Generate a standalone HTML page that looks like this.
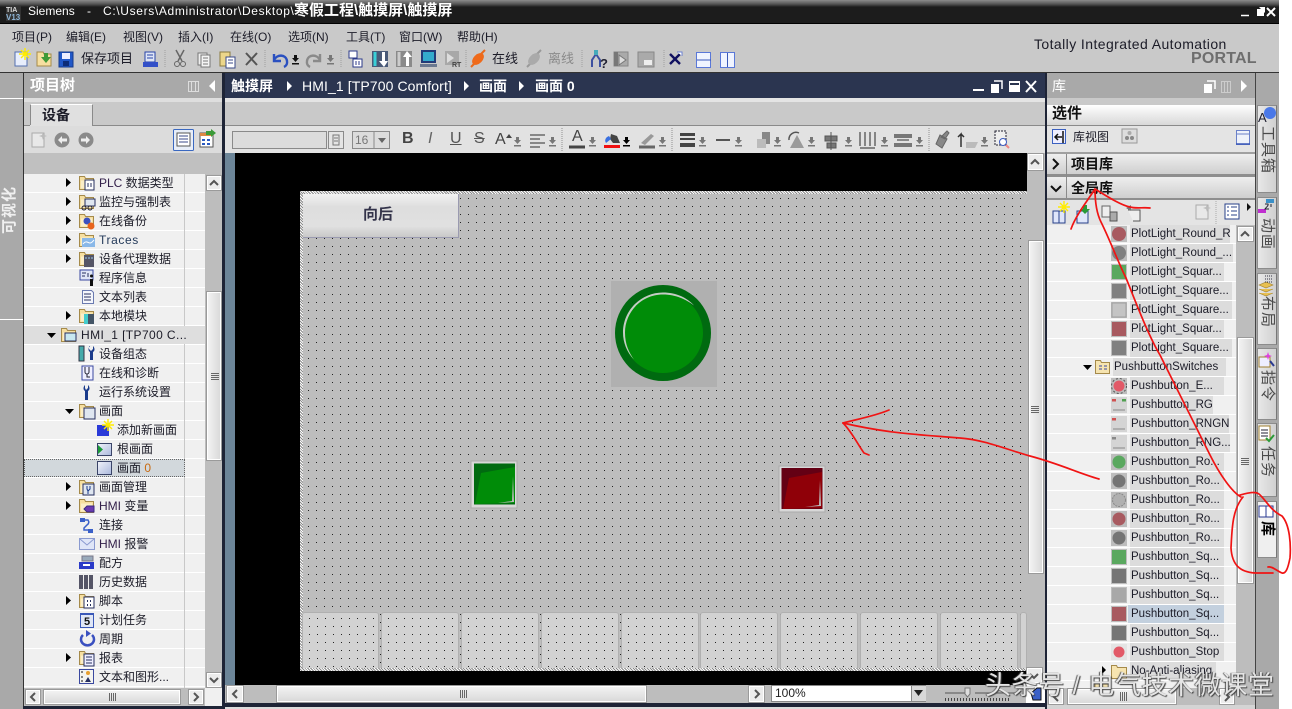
<!DOCTYPE html>
<html lang="zh"><head><meta charset="utf-8"><title>Siemens TIA Portal</title>
<style>
html,body{margin:0;padding:0;background:#fff}
#p{position:relative;width:1292px;height:709px;overflow:hidden;background:#fff;font:12px "Liberation Sans","WenQuanYi Zen Hei","Noto Sans CJK SC",sans-serif;color:#1c1c28}
.b{position:absolute}
.t{position:absolute;white-space:nowrap;line-height:16px}
.w{color:#fff}
.sb{position:absolute;background:linear-gradient(90deg,#f4f4f4,#d8d8d8);border:1px solid #9a9a9a;outline:1px solid #fff;outline-offset:-2px;box-sizing:border-box}
.sh{position:absolute;background:linear-gradient(#f4f4f4,#d8d8d8);border:1px solid #9a9a9a;outline:1px solid #fff;outline-offset:-2px;box-sizing:border-box}
.btn{position:absolute;background:#ececec;border:1px solid #9a9a9a;outline:1px solid #fff;outline-offset:-2px;box-sizing:border-box}
.c{position:absolute;background:#dcdcdc;height:18px;line-height:18px;white-space:nowrap;font-size:11.5px;padding-left:1px;box-sizing:border-box;color:#1c1c28}
.tab{position:absolute;left:1257px;width:20px;background:linear-gradient(90deg,#e8e8e8,#d0d0d0);border:1px solid #8c8c8c;border-right-color:#777;box-sizing:border-box}
.v{position:absolute;writing-mode:vertical-rl;text-orientation:sideways;white-space:nowrap;font-size:15px;line-height:18px;color:#4a4a4a;letter-spacing:1px}
.key{position:absolute;top:612px;height:56px;background-color:#d2d2d2;background-image:conic-gradient(from 0deg at 1px 1px,transparent 75%,#222 0);background-size:8px 8px;background-position:6px 5px;border:1px solid #b0b0b0;border-bottom:0;border-radius:3px 3px 0 0;box-sizing:border-box}
.h{background-image:repeating-linear-gradient(45deg,#fff 0 1px,#8a8a8a 1px 2px)}
</style></head><body><div id="p">

<!-- chrome -->
<div class="b" style="left:0;top:0;width:1279px;height:23px;background:linear-gradient(#8c8c8c 0,#555 4px,#1c1c1c 7px,#1c1c1c 100%)"></div>
<div class="b" style="left:0;top:23px;width:1279px;height:50px;background:#c9c9c9;border-top:1px solid #000;box-sizing:border-box"></div>
<div class="b" style="left:0;top:73px;width:1279px;height:636px;background:#a9a9a9"></div>
<div class="b" style="left:0;top:72px;width:1279px;height:1px;background:#333"></div>
<div class="b" style="left:0;top:98px;width:23px;height:1px;background:#fff"></div>
<div class="b" style="left:0;top:319px;width:23px;height:1px;background:#fff"></div>
<div class="b" style="left:23px;top:73px;width:1px;height:636px;background:#333"></div>

<!-- left panel -->
<div class="b" style="left:24px;top:73px;width:199px;height:25px;background:#a9a9a9"></div>
<div class="b" style="left:24px;top:98px;width:199px;height:28px;background:#c9c9c9;border-top:4px solid #dedede;box-sizing:border-box"></div>
<div class="b" style="left:30px;top:104px;width:63px;height:22px;background:#e0e0e0;border:1px solid #8a8a8a;border-bottom:0;border-top-color:#fff;box-sizing:border-box"></div>
<div class="b" style="left:24px;top:125px;width:199px;height:1px;background:#8a8a8a"></div>
<div class="b" style="left:30px;top:125px;width:62px;height:1px;background:#e0e0e0"></div>
<div class="b" style="left:24px;top:126px;width:199px;height:27px;background:#dcdcdc"></div>
<div class="b" style="left:24px;top:153px;width:199px;height:21px;background:#c0c0c0"></div>
<div class="b" style="left:24px;top:174px;width:181px;height:514px;background:repeating-linear-gradient(#f0f0f0 0 18px,#fff 18px 19px)"></div>
<div class="b" style="left:184px;top:174px;width:1px;height:514px;background:#c8c8c8"></div>
<div class="b" style="left:24px;top:326px;width:181px;height:18px;background:#dedede"></div>
<div class="b" style="left:24px;top:459px;width:161px;height:18px;background:#d2d8dc;border:1px dotted #666;box-sizing:border-box"></div>
<div class="b" style="left:205px;top:174px;width:18px;height:514px;background:#bdbdbd"></div>
<div class="btn" style="left:206px;top:175px;width:16px;height:16px"></div>
<div class="sb" style="left:206px;top:291px;width:16px;height:170px"></div>
<div class="btn" style="left:206px;top:672px;width:16px;height:16px"></div>
<div class="b" style="left:24px;top:688px;width:199px;height:18px;background:#f0f0f0"></div>
<div class="b" style="left:24px;top:688px;width:181px;height:18px;background:#bdbdbd"></div>
<div class="btn" style="left:25px;top:689px;width:16px;height:16px"></div>
<div class="sh" style="left:43px;top:689px;width:138px;height:16px"></div>
<div class="btn" style="left:188px;top:689px;width:16px;height:16px"></div>
<div class="b" style="left:23px;top:706px;width:202px;height:3px;background:#1e2436"></div>

<!-- divider -->
<div class="b" style="left:222px;top:73px;width:3px;height:636px;background:#1e2436"></div>
<div class="b" style="left:225px;top:153px;width:10px;height:532px;background:#6c8598"></div>

<!-- center -->
<div class="b" style="left:225px;top:73px;width:820px;height:25px;background:#2b3550"></div>
<div class="b" style="left:225px;top:98px;width:820px;height:4px;background:#e4e4e4"></div>
<div class="b" style="left:225px;top:102px;width:820px;height:24px;background:#c9c9c9"></div>
<div class="b" style="left:225px;top:125px;width:820px;height:1px;background:#8a8a8a"></div>
<div class="b" style="left:225px;top:126px;width:820px;height:27px;background:#e2e2e2"></div>
<div class="b" style="left:235px;top:153px;width:792px;height:532px;background:#000"></div>

<!-- HMI screen -->
<div class="b" style="left:300px;top:191px;width:727px;height:480px;background-color:#bdbdbd;background-image:conic-gradient(from 0deg at 1px 1px,transparent 75%,#222 0);background-size:8px 8px;background-position:8px 7px"></div>
<div class="b h" style="left:300px;top:191px;width:727px;height:3px"></div>
<div class="b h" style="left:300px;top:191px;width:3px;height:480px"></div>
<div class="b h" style="left:300px;top:668px;width:727px;height:3px"></div>
<div class="b" style="left:303px;top:194px;width:156px;height:44px;background:linear-gradient(#f2f2f2,#dedede 30%,#e0e0e0 75%,#c8c8c8);border-right:1px solid #9a9ab0;border-bottom:1px solid #9a9ab0;box-sizing:border-box"></div>
<div class="t" style="left:363px;top:207px;font-size:15px;font-weight:bold;color:#33334a">向后</div>
<div class="b" style="left:611px;top:281px;width:106px;height:106px;background:#b0b0b0"></div>
<div class="key" style="left:302px;width:77px"></div><div class="key" style="left:381px;width:78px"></div><div class="key" style="left:461px;width:78px"></div><div class="key" style="left:541px;width:78px"></div><div class="key" style="left:621px;width:78px"></div><div class="key" style="left:700px;width:78px"></div><div class="key" style="left:780px;width:78px"></div><div class="key" style="left:860px;width:78px"></div><div class="key" style="left:940px;width:78px"></div><div class="key" style="left:1020px;width:7px"></div>

<!-- center scrollbars -->
<div class="b" style="left:1027px;top:153px;width:18px;height:532px;background:#bdbdbd"></div>
<div class="btn" style="left:1027px;top:153px;width:17px;height:18px"></div>
<div class="sb" style="left:1028px;top:240px;width:16px;height:334px"></div>
<div class="btn" style="left:1026px;top:667px;width:17px;height:17px"></div>
<div class="b" style="left:225px;top:685px;width:820px;height:18px;background:#bdbdbd"></div>
<div class="btn" style="left:226px;top:685px;width:18px;height:18px"></div>
<div class="sh" style="left:276px;top:685px;width:371px;height:18px"></div>
<div class="btn" style="left:748px;top:685px;width:17px;height:18px"></div>
<div class="b" style="left:771px;top:685px;width:155px;height:17px;background:#fff;border:1px solid #888;box-sizing:border-box;line-height:15px;padding-left:3px;color:#222">100%</div>
<div class="b" style="left:911px;top:686px;width:15px;height:15px;background:#d8d8d8;border-left:1px solid #888;box-sizing:border-box"></div>
<div class="b" style="left:1026px;top:684px;width:19px;height:19px;background:#fff"></div>
<div class="b" style="left:225px;top:703px;width:820px;height:4px;background:#1e2436"></div>
<div class="b" style="left:225px;top:707px;width:820px;height:2px;background:#dcdcdc"></div>

<!-- right panel -->
<div class="b" style="left:1045px;top:73px;width:2px;height:636px;background:#1e2436"></div>
<div class="b" style="left:1047px;top:73px;width:208px;height:25px;background:#a9a9a9"></div>
<div class="b" style="left:1047px;top:98px;width:208px;height:7px;background:#c9c9c9"></div>
<div class="b" style="left:1047px;top:105px;width:208px;height:21px;background:linear-gradient(#fff,#d8d8d8);border-bottom:1px solid #8a8a8a;box-sizing:border-box"></div>
<div class="b" style="left:1047px;top:126px;width:208px;height:26px;background:#e4e4e4"></div>
<div class="b" style="left:1047px;top:152px;width:208px;height:3px;background:#a0a0a0"></div>
<div class="b" style="left:1047px;top:154px;width:208px;height:20px;background:linear-gradient(#eee,#cfcfcf)"></div>
<div class="b" style="left:1047px;top:174px;width:208px;height:3px;background:#8e8e8e"></div>
<div class="b" style="left:1047px;top:177px;width:208px;height:21px;background:linear-gradient(#eee,#cfcfcf)"></div>
<div class="b" style="left:1047px;top:198px;width:208px;height:2px;background:#8e8e8e"></div>
<div class="b" style="left:1066px;top:154px;width:1px;height:44px;background:#8a8a8a"></div>
<div class="b" style="left:1047px;top:200px;width:208px;height:25px;background:#e4e4e4"></div>
<div class="b" style="left:1047px;top:225px;width:189px;height:463px;background:repeating-linear-gradient(#f0f0f0 0 18px,#fff 18px 19px)"></div>
<div class="b" style="left:1236px;top:225px;width:19px;height:463px;background:#bdbdbd"></div>
<div class="btn" style="left:1237px;top:226px;width:17px;height:16px"></div>
<div class="sb" style="left:1237px;top:337px;width:17px;height:247px"></div>
<div class="b" style="left:1047px;top:688px;width:208px;height:17px;background:#bdbdbd"></div>
<div class="b" style="left:1047px;top:705px;width:208px;height:4px;background:#d4d4d4"></div>
<div class="btn" style="left:1048px;top:688px;width:16px;height:17px"></div>
<div class="sh" style="left:1067px;top:688px;width:110px;height:17px"></div>
<div class="btn" style="left:1219px;top:688px;width:16px;height:17px"></div>
<div class="b" style="left:1255px;top:73px;width:1px;height:636px;background:#444"></div>

<!-- right tabs -->
<div class="tab" style="top:105px;height:88px"></div>
<div class="tab" style="top:197px;height:72px"></div>
<div class="tab" style="top:273px;height:72px"></div>
<div class="tab" style="top:348px;height:72px"></div>
<div class="tab" style="top:423px;height:74px"></div>
<div class="tab" style="top:501px;height:57px;background:#efefef"></div>

<!-- library chips -->
<div class="c" style="left:1130px;top:225px;width:100px">PlotLight_Round_R</div>
<div class="c" style="left:1130px;top:244px;width:103px">PlotLight_Round_...</div>
<div class="c" style="left:1130px;top:263px;width:94px">PlotLight_Squar...</div>
<div class="c" style="left:1130px;top:282px;width:102px">PlotLight_Square...</div>
<div class="c" style="left:1130px;top:301px;width:102px">PlotLight_Square...</div>
<div class="c" style="left:1130px;top:320px;width:94px">PlotLight_Squar...</div>
<div class="c" style="left:1130px;top:339px;width:102px">PlotLight_Square...</div>
<div class="c" style="left:1113px;top:358px;width:113px">PushbuttonSwitches</div>
<div class="c" style="left:1130px;top:377px;width:94px">Pushbutton_E...</div>
<div class="c" style="left:1130px;top:396px;width:83px">Pushbutton_RG</div>
<div class="c" style="left:1130px;top:415px;width:99px">Pushbutton_RNGN</div>
<div class="c" style="left:1130px;top:434px;width:100px">Pushbutton_RNG...</div>
<div class="c" style="left:1130px;top:453px;width:94px">Pushbutton_Ro...</div>
<div class="c" style="left:1130px;top:472px;width:94px">Pushbutton_Ro...</div>
<div class="c" style="left:1130px;top:491px;width:94px">Pushbutton_Ro...</div>
<div class="c" style="left:1130px;top:510px;width:94px">Pushbutton_Ro...</div>
<div class="c" style="left:1130px;top:529px;width:94px">Pushbutton_Ro...</div>
<div class="c" style="left:1130px;top:548px;width:94px">Pushbutton_Sq...</div>
<div class="c" style="left:1130px;top:567px;width:94px">Pushbutton_Sq...</div>
<div class="c" style="left:1130px;top:586px;width:94px">Pushbutton_Sq...</div>
<div class="c" style="left:1128px;top:605px;width:96px;background:#c3d0de;padding-left:3px">Pushbutton_Sq...</div>
<div class="c" style="left:1130px;top:624px;width:94px">Pushbutton_Sq...</div>
<div class="c" style="left:1130px;top:643px;width:94px">Pushbutton_Stop</div>
<div class="c" style="left:1130px;top:662px;width:86px">No-Anti-aliasing</div>

<!-- icons -->
<svg class="b" style="left:0;top:0" width="1292" height="709" viewBox="0 0 1292 709">
<defs>
<symbol id="f" overflow="visible"><path d="M.5 1.5h5l1 2h8v11H.5z" fill="#f6dfa0" stroke="#a58a4a"/><path d="M2 5.500h11v8H2z" fill="#fbeec8"/></symbol>
<symbol id="o" overflow="visible"><rect x="5" y="5" width="11" height="11" fill="#dfe6f0" stroke="#27305f"/></symbol>
<symbol id="ar" overflow="visible"><path d="M0 0l5 4.500L0 9z" fill="#000"/></symbol>
<symbol id="ad" overflow="visible"><path d="M0 0h9L4.500 5z" fill="#000"/></symbol>
<symbol id="dn" overflow="visible"><path d="M2 0h3v3h2L3.500 7 0 3h2zM0 8h7v1.500H0z" fill="#777"/></symbol>
<symbol id="star" overflow="visible"><path d="M0-6V6M-6 0H6M-4-4L4 4M4-4L-4 4" stroke="#ffec00" stroke-width="1.400"/></symbol>
<symbol id="screen" overflow="visible"><rect x=".5" y=".5" width="14" height="13" fill="url(#sg)" stroke="#3a4468"/></symbol>
<linearGradient id="sg" x1="0" y1="0" x2="1" y2="1"><stop offset="0" stop-color="#f2f4fa"/><stop offset="1" stop-color="#aab8dc"/></linearGradient>
</defs>

<!-- title bar -->
<rect x="6" y="6" width="15" height="15" fill="#333"/>
<text x="6" y="12" font-size="7" font-family="Liberation Sans" fill="#ddd" font-weight="bold">TIA</text>
<text x="6" y="20" font-size="8" font-family="Liberation Sans" fill="#8fb6d8" font-weight="bold">V13</text>
<path d="M1241 15.500h8" stroke="#fff" stroke-width="1.500"/>
<path d="M1257 9h7v7h-7zM1259 7h6v6" fill="#fff"/>
<path d="M1267 8l8 8M1275 8l-8 8" stroke="#fff" stroke-width="2"/>

<!-- main toolbar -->
<path d="M15 52h12V66H15z" fill="#e8eefc" stroke="#5470b0"/><use href="#star" x="25" y="54"/>
<path d="M37 52h6l1 2h7v12H37z" fill="#f6dfa0" stroke="#a58a4a"/><path d="M44 53h4v4h3l-5 6-5-6h3z" fill="#3f9a38"/>
<path d="M59 52h14v15H59z" fill="#2158c8" stroke="#173a8a"/><rect x="62" y="53" width="8" height="6" fill="#eef"/><rect x="63" y="61" width="6" height="5" fill="#0d2c78"/>
<path d="M145 52h10v10h-10z" fill="#dfe6f6" stroke="#2844a8"/><path d="M143 62h15v5h-15z" fill="#3350c8"/><path d="M147 55h6M147 58h6" stroke="#2844a8"/>
<path d="M165 50v18M265 50v18M341 50v18M466 50v18M582 50v18M664 50v18" stroke="#a0a0a0" stroke-dasharray="1 1"/>
<path d="M176 50l6 11M184 50l-6 11" stroke="#666" stroke-width="1.500"/><circle cx="177" cy="64" r="2.500" fill="none" stroke="#666"/><circle cx="183" cy="64" r="2.500" fill="none" stroke="#666"/>
<path d="M198 53h9v12h-9z" fill="#eee" stroke="#777"/><path d="M201 55h9v12h-9z" fill="#f4f4f4" stroke="#777"/><path d="M203 58h5M203 61h5M203 64h5" stroke="#777"/>
<path d="M220 52h10v14h-10z" fill="#ecd68a" stroke="#8a7a40"/><path d="M226 57h9v11h-9z" fill="#fff" stroke="#3a4a88"/><path d="M228 60h5M228 63h5" stroke="#3a4a88"/>
<path d="M246 53l11 12M257 53l-11 12" stroke="#555" stroke-width="2"/>
<path d="M274 54v7h7M274 60c3-6 12-6 13 1 .5 3-1 5-3 6" fill="none" stroke="#2a50c0" stroke-width="2.400"/>
<path d="M294 55h3v3h2l-3.500 4-3.500-4h2zM292 63h7v1.500h-7z" fill="#111"/>
<path d="M320 54v7h-7M320 60c-3-6-12-6-13 1-.5 3 1 5 3 6" fill="none" stroke="#8a8a8a" stroke-width="2.400"/>
<use href="#dn" x="327" y="55"/>
<path d="M349 51h8v7h-8z" fill="#fff" stroke="#2c3a8a"/><path d="M353 59h9v8h-9z" fill="#fff" stroke="#2c3a8a"/><path d="M356 61v4M359 61v4" stroke="#2c3a8a"/>
<rect x="372" y="51" width="16" height="16" fill="#4a5a78"/><path d="M375 52v14" stroke="#3ad0d8" stroke-width="3"/><path d="M382 52v9h-3l5 6 4-6h-3v-9z" fill="#fff"/>
<rect x="396" y="51" width="16" height="16" fill="#8a8a8a"/><path d="M399 52v14" stroke="#ccc" stroke-width="3"/><path d="M406 66v-9h-3l4-6 5 6h-3v9z" fill="#fff"/>
<path d="M422 51h13v11h-13z" fill="#3ac" stroke="#223a78" stroke-width="2"/><path d="M420 64h17v3h-17z" fill="#6a7890"/>
<path d="M445 51h14v14h-14z" fill="#a8a8a8"/><path d="M447 53l7 5-7 5z" fill="#ddd"/><text x="452" y="67" font-size="7" font-weight="bold" font-family="Liberation Sans" fill="#444">RT</text>
<path d="M471 67l4-4M485 50l-4 4" stroke="#e86a1c" stroke-width="2"/><ellipse cx="478" cy="59" rx="4.500" ry="7" transform="rotate(45 478 59)" fill="#ef6a1a"/>
<path d="M527 67l4-4M541 50l-4 4" stroke="#999" stroke-width="2"/><ellipse cx="534" cy="59" rx="4.500" ry="7" transform="rotate(45 534 59)" fill="#aaa"/>
<path d="M592 67v-7l4-6 4 6v7" fill="none" stroke="#3c50a0" stroke-width="2"/><rect x="594" y="50" width="4" height="5" fill="#4ab"/><text x="600" y="68" font-size="13" font-weight="bold" font-family="Liberation Sans" fill="#223">?</text>
<path d="M614 52h14v14h-14z" fill="#aaa" stroke="#888"/><path d="M619 55l7 5-7 5z" fill="#ddd" stroke="#777"/><rect x="614" y="52" width="4" height="14" fill="#777"/>
<path d="M638 52h16v15h-16z" fill="#aaa" stroke="#888"/><rect x="644" y="60" width="8" height="5" fill="#eee"/>
<path d="M670 54l10 10M680 54l-10 10" stroke="#101060" stroke-width="2.400"/><path d="M677 52h5v4" fill="#fff" stroke="#6a80d0"/>
<rect x="696.500" y="52.500" width="14" height="15" fill="#f0f4ff" stroke="#5a78d8"/><path d="M697 60h14" stroke="#3a58b8"/>
<rect x="720.500" y="52.500" width="14" height="15" fill="#f0f4ff" stroke="#5a78d8"/><path d="M727.500 53v14" stroke="#3a58b8"/>

<!-- panel header icons -->
<path d="M188.500 81.500h10v10h-10zM191.500 82v9M195.500 82v9" fill="none" stroke="#ddd"/>
<path d="M215 80v12l-6-6z" fill="#fff"/>
<path d="M973 90h11" stroke="#fff" stroke-width="2"/><path d="M991 84h8v9h-8z" fill="#fff"/><path d="M994 81h8v8" fill="none" stroke="#fff" stroke-width="1.500"/>
<rect x="1009" y="81" width="11" height="11" fill="#fff"/><rect x="1010" y="83" width="9" height="2" fill="#2b3550"/>
<path d="M1026 81l10 11M1036 81l-10 11" stroke="#fff" stroke-width="2"/>
<path d="M1204 84h8v9h-8z" fill="#fff"/><path d="M1207 81h8v8" fill="none" stroke="#fff" stroke-width="1.500"/>
<path d="M1221.500 81.500h9v11h-9zM1224.500 82v10M1227.500 82v10" fill="none" stroke="#ccc"/>
<path d="M1241 80v12l6-6z" fill="#fff"/>
<path d="M287 81l5 5-5 5zM464 81l5 5-5 5zM519 81l5 5-5 5z" fill="#fff"/>

<!-- left toolbar -->
<path d="M32 133h12v14H32z" fill="#e8e8e8" stroke="#aaa"/><path d="M43 132l1 3 3 1-3 1-1 3-1-3-3-1 3-1z" fill="#bbb"/>
<circle cx="62" cy="140" r="7.500" fill="#8a8a8a"/><path d="M58 140l4-4v2.500h5v3h-5V144z" fill="#eee"/>
<circle cx="86" cy="140" r="7.500" fill="#8a8a8a"/><path d="M90 140l-4-4v2.500h-5v3h5V144z" fill="#eee"/>
<rect x="173.500" y="129.500" width="20" height="21" rx="1" fill="#e8eef8" stroke="#3a68c0"/><path d="M177 133h13v13h-13z" fill="#fff" stroke="#555"/><path d="M179 136h9M179 139h9M179 142h9" stroke="#3a4a88"/>
<rect x="200" y="133" width="13" height="14" fill="#fff" stroke="#555"/><path d="M200 133h13v3h-13z" fill="#d84"/><path d="M202 139h3v2h-3zM207 139h3v2h-3zM202 143h3v2h-3zM207 143h3v2h-3z" fill="#2a5ac0"/><path d="M206 131h5v-2l5 4-5 4v-2h-5z" fill="#3a9a38"/>

<!-- center font toolbar -->
<rect x="232.500" y="131.500" width="94" height="17" fill="#dcdcdc" stroke="#8a8a8a"/>
<rect x="328.500" y="131.500" width="15" height="17" fill="#e4e4e4" stroke="#8a8a8a"/><path d="M333 135h6v10h-6zM334 138h4M334 141h4" fill="none" stroke="#777"/>
<rect x="352.500" y="131.500" width="37" height="17" fill="#dcdcdc" stroke="#8a8a8a"/><path d="M374 131v18" stroke="#8a8a8a"/><path d="M378 138h8l-4 5z" fill="#666"/>
<path d="M562 128v24M672 128v24M929 128v24" stroke="#909090" stroke-dasharray="1 1"/>
<path d="M530 134h15v2h-15zM530 138h10v2h-10zM530 142h15v2h-15zM530 146h10v2h-10z" fill="#888"/>
<path d="M569 147h16" stroke="#444" stroke-width="3"/>
<path d="M604 146.500h16" stroke="#f01010" stroke-width="3"/><path d="M611 134l6 2 3 7h-7l-3-4z" fill="#444"/><path d="M606 143c-2-3 0-6 3-7l2 3z" fill="#3a70e0"/>
<path d="M639 147h16" stroke="#666" stroke-width="3"/><path d="M641 143l10-9 3 2-9 9z" fill="#999"/>
<path d="M680 133h15v3h-15zM680 138h15v2h-15zM680 143h15v4h-15z" fill="#444"/>
<path d="M716 140h14" stroke="#555" stroke-width="2"/>
<path d="M754 144h8v-12h8v12z" fill="#888"/><rect x="757" y="139" width="9" height="9" fill="#bbb"/>
<path d="M790 148l7-13 7 13z" fill="#9a9a9a"/><path d="M789 140a7 7 0 0 1 10-7" fill="none" stroke="#555" stroke-width="1.500"/>
<path d="M825 136h12v5h-12zM827 143h9v5h-9zM831 132v18" fill="#777" stroke="#555"/>
<path d="M860 132v14M865 132v14M870 132v14M875 132v14M860 148h15" stroke="#666" stroke-width="1.500"/>
<path d="M894 134h18v4h-18zM894 143h18v4h-18z" fill="#777"/><path d="M897 140h12" stroke="#333"/>
<path d="M936 144l4-9 7 4-5 9zM941 137l6-6 2 2-4 6z" fill="#888" stroke="#666"/>
<path d="M961 147v-13l-3 3M961 134l3 3" fill="none" stroke="#333" stroke-width="1.500"/><path d="M966 142h12l-3 6h-9z" fill="#bbb"/>
<rect x="995" y="131" width="11" height="14" fill="#eee" stroke="#223" stroke-dasharray="2 1"/><circle cx="1003" cy="142" r="3.500" fill="#fff" stroke="#3a5ac0"/><path d="M1006 145l3 3" stroke="#e88" stroke-width="2"/>
<use href="#dn" x="514" y="137"/><use href="#dn" x="549" y="137"/><use href="#dn" x="589" y="137"/>
<path d="M625 137h3v3h2l-3.500 4-3.500-4h2zM623 145h7v1.500h-7z" fill="#000"/>
<use href="#dn" x="659" y="137"/><use href="#dn" x="699" y="137"/><use href="#dn" x="735" y="137"/><use href="#dn" x="774" y="137"/><use href="#dn" x="808" y="137"/><use href="#dn" x="845" y="137"/><use href="#dn" x="881" y="137"/><use href="#dn" x="916" y="137"/><use href="#dn" x="981" y="137"/>

<!-- tree arrows -->
<use href="#ar" x="66" y="178"/><use href="#ar" x="66" y="197"/><use href="#ar" x="66" y="216"/><use href="#ar" x="66" y="235"/><use href="#ar" x="66" y="254"/><use href="#ar" x="66" y="311"/>
<use href="#ad" x="47" y="333"/><use href="#ad" x="65" y="409"/>
<use href="#ar" x="66" y="482"/><use href="#ar" x="66" y="501"/><use href="#ar" x="66" y="596"/><use href="#ar" x="66" y="653"/>

<!-- tree icons -->
<use href="#f" x="79" y="175"/><rect x="85" y="180" width="9" height="10" fill="#fff" stroke="#27305f"/><path d="M88 183v4M91 183v4" stroke="#27305f"/>
<use href="#f" x="79" y="194"/><rect x="85" y="199" width="10" height="7" fill="#dfe6f0" stroke="#27305f"/><circle cx="84" cy="208" r="2" fill="none" stroke="#223"/><circle cx="90" cy="208" r="2" fill="none" stroke="#223"/>
<use href="#f" x="79" y="213"/><circle cx="87" cy="221" r="3.500" fill="#3a50c0"/><circle cx="91" cy="226" r="3.500" fill="#e8641c"/>
<use href="#f" x="79" y="232"/><rect x="82" y="238" width="13" height="9" fill="#8ab8e8"/><path d="M83 244c3-4 5-1 7-1s3-2 4-3" fill="none" stroke="#fff"/>
<use href="#f" x="79" y="251"/><rect x="84" y="255" width="10" height="12" fill="#556"/><path d="M86 257v2M89 257v2M92 257v2" stroke="#9ce"/>
<rect x="80" y="270" width="13" height="10" fill="#dfe6f6" stroke="#3a48a0"/><path d="M82 273h4M82 276h3M88 273v4" stroke="#27305f"/><rect x="90" y="279" width="3" height="7" fill="#111"/><circle cx="91.500" cy="276" r="1.500" fill="#111"/>
<path d="M82.500 290.500h9l2 2v11h-11z" fill="#f4f6fc" stroke="#6a7ab0"/><path d="M84 294h7M84 297h7M84 300h7" stroke="#27305f"/>
<use href="#f" x="79" y="308"/><rect x="84" y="314" width="10" height="10" fill="#456"/><rect x="84" y="314" width="4" height="10" fill="#4cc"/>
<use href="#f" x="61" y="327"/><rect x="65" y="333" width="11" height="8" fill="#c8e8f0" stroke="#27305f"/>
<rect x="79" y="346" width="5" height="15" fill="#4aa" stroke="#334"/><path d="M89 346v3l2 2 2-2v-3c2 2 2 5 0 6v8h-3v-8c-2-1-2-4 0-6z" fill="#1a3a8a"/>
<path d="M82 366h11v14H82z" fill="#eef" stroke="#3a48a0"/><path d="M85 367v5a2 2 0 0 0 4 0v-5M87 374v3h3" fill="none" stroke="#223"/>
<path d="M85 385v3l1 2 2-2v-3c2 2 2 5 0 6v9h-3v-9c-2-1-2-4 0-6z" fill="#1a3a8a"/>
<use href="#f" x="79" y="403"/><use href="#o" x="79" y="403"/>
<rect x="97" y="425" width="12" height="11" fill="#2a3ad8"/><use href="#star" x="108" y="425"/>
<rect x="97.500" y="443.500" width="14" height="12" fill="url(#sg)" stroke="#3a4468"/><path d="M98 445l5 4.500-5 4.500z" fill="#1a9a38"/>
<use href="#screen" x="97" y="461"/>
<use href="#f" x="79" y="479"/><rect x="83" y="484" width="11" height="11" fill="#dfe6f0" stroke="#27305f"/><path d="M87 486v3l1 2 2-2v-3M88 490v4" stroke="#1a3a8a" fill="none"/>
<use href="#f" x="79" y="498"/><path d="M84 509l3-3h7v6h-7z" fill="#6a3ab0" stroke="#3a2a80"/>
<rect x="80" y="518" width="5" height="4" fill="#3a60c8"/><rect x="88" y="529" width="5" height="4" fill="#3a60c8"/><path d="M84 520h4q2 3-1 5l-3 3v2h5" fill="none" stroke="#3a60c8" stroke-width="1.500"/>
<rect x="79.500" y="538.500" width="15" height="11" fill="#dfe6f8" stroke="#8a9ad0"/><path d="M80 539l7 6 7-6" fill="none" stroke="#8a9ad0"/>
<path d="M82 556h11v5H82z" fill="#9ab" stroke="#778"/><path d="M79 562h15v7H79z" fill="#2a3ac8"/><rect x="83" y="564" width="7" height="2" fill="#fff"/>
<rect x="79" y="575" width="4" height="14" fill="#556"/><rect x="84" y="575" width="4" height="14" fill="#556"/><rect x="89" y="575" width="4" height="14" fill="#556"/>
<use href="#f" x="79" y="593"/><rect x="84" y="597" width="10" height="11" fill="#fff" stroke="#27305f"/><path d="M87 600h1v2h-1zM90 600h1v2h-1zM87 604h1v2h-1zM90 604h1v2h-1z" fill="#27305f"/>
<rect x="80.500" y="613.500" width="13" height="14" fill="#dfe6f6" stroke="#3a58b8"/><text x="84" y="625" font-size="11" font-weight="bold" font-family="Liberation Sans" fill="#111">5</text><rect x="80" y="613" width="14" height="2" fill="#3a58b8"/>
<path d="M83 635a6.500 6 0 1 0 9 0" fill="none" stroke="#3a50c0" stroke-width="2.500"/><path d="M86 630l5 3.500-5 3.500z" fill="#3a50c0"/>
<use href="#f" x="79" y="650"/><rect x="84" y="654" width="10" height="12" fill="#eef" stroke="#27305f"/><path d="M86 657h6M86 660h6M86 663h6" stroke="#27305f"/>
<rect x="79.500" y="669.500" width="14" height="14" fill="#f4f4f0" stroke="#3a48a0"/><circle cx="88" cy="673" r="2" fill="#e8a030"/><path d="M85 682l3-5 3 5z" fill="#27305f"/>
<path d="M81 672h2M81 677h2M81 681h2" stroke="#111"/>

<!-- right header icons -->
<rect x="1052.500" y="129.500" width="13" height="14" fill="#eef" stroke="#3a60c0"/><path d="M1062 137h-7M1058 134l-3 3 3 3M1063 131v12" stroke="#111" fill="none" stroke-width="1.500"/>
<rect x="1122" y="129" width="15" height="14" fill="#ddd" stroke="#999"/><circle cx="1129.500" cy="133" r="2" fill="#aaa"/><circle cx="1127" cy="138" r="2" fill="#888"/><circle cx="1132" cy="138" r="2" fill="#888"/>
<rect x="1236.500" y="130.500" width="13" height="14" fill="#eef2fa" stroke="#6a80c8"/><path d="M1237 134h13" stroke="#6a80c8"/><path d="M1236 144h14" stroke="#3a58b8" stroke-width="1.500"/>
<path d="M1053 159l5 5-5 5" fill="none" stroke="#111" stroke-width="2"/>
<path d="M1051 186l5 5 5-5" fill="none" stroke="#111" stroke-width="2"/>
<!-- lib toolbar -->
<path d="M1053 211h12v12h-12z" fill="#dfe6fa" stroke="#27408a"/><path d="M1059 211v12" stroke="#27408a"/><use href="#star" x="1064" y="207"/>
<path d="M1077 211h11v12h-11z" fill="#dfe6fa" stroke="#27408a"/><path d="M1083 205h4v4h3l-5 5-5-5h3z" fill="#2a9a38"/>
<path d="M1102 206h8v11h-8z" fill="#eee" stroke="#666"/><rect x="1110" y="212" width="7" height="9" fill="#aaa" stroke="#555"/>
<path d="M1128 210h12v11h-7" fill="#eee" stroke="#555"/><path d="M1126 208l5-3v6z" fill="#777"/>
<path d="M1196 205h12v14h-12z" fill="#e8e8e8" stroke="#aaa"/><path d="M1207 204l1 3 3 1-3 1-1 3-1-3-3-1 3-1z" fill="#bbb"/>
<path d="M1216 201v24" stroke="#aaa" stroke-dasharray="1 1"/>
<rect x="1225" y="204" width="14" height="15" fill="#fff" stroke="#27408a"/><path d="M1227 207h2M1231 207h6M1227 211h2M1231 211h6M1227 215h2M1231 215h6" stroke="#27408a"/>
<path d="M1247 203l4 4-4 4z" fill="#111"/>

<!-- library icons -->
<g fill="#bdbdbd">
<rect x="1111" y="226" width="16" height="16"/><rect x="1111" y="245" width="16" height="16"/><rect x="1111" y="264" width="16" height="16"/><rect x="1111" y="283" width="16" height="16"/><rect x="1111" y="302" width="16" height="16"/><rect x="1111" y="321" width="16" height="16"/><rect x="1111" y="340" width="16" height="16"/>
<rect x="1111" y="378" width="16" height="16"/><rect x="1111" y="454" width="16" height="16"/><rect x="1111" y="473" width="16" height="16"/><rect x="1111" y="492" width="16" height="16"/><rect x="1111" y="511" width="16" height="16"/><rect x="1111" y="530" width="16" height="16"/>
<rect x="1111" y="549" width="16" height="16"/><rect x="1111" y="568" width="16" height="16"/><rect x="1111" y="587" width="16" height="16"/><rect x="1111" y="606" width="16" height="16"/><rect x="1111" y="625" width="16" height="16"/>
</g>
<rect x="1111" y="644" width="16" height="16" fill="#e4e4e4"/>
<rect x="1111" y="397" width="16" height="16" fill="#d4d4d4"/><rect x="1111" y="416" width="16" height="16" fill="#d4d4d4"/><rect x="1111" y="435" width="16" height="16" fill="#d4d4d4"/>
<rect x="1112" y="399" width="4" height="2.500" fill="#d05050"/><rect x="1122" y="399" width="4" height="2.500" fill="#50a050"/><path d="M1113 410h12" stroke="#888"/>
<rect x="1112" y="418" width="4" height="2.500" fill="#d05050"/><path d="M1113 429h12" stroke="#888"/>
<rect x="1112" y="437" width="4" height="2.500" fill="#888"/><path d="M1113 448h12" stroke="#888"/>
<circle cx="1119" cy="234" r="7" fill="#a85a60"/><circle cx="1119" cy="253" r="7" fill="#808080"/>
<rect x="1112" y="265" width="14" height="14" fill="#5aa85f"/><rect x="1112" y="284" width="14" height="14" fill="#808080"/><rect x="1112" y="303" width="14" height="14" fill="#c4c4c4" stroke="#a0a0a0"/><rect x="1112" y="322" width="14" height="14" fill="#a85a60"/><rect x="1112" y="341" width="14" height="14" fill="#808080"/>
<circle cx="1119" cy="386" r="7.500" fill="none" stroke="#555" stroke-dasharray="2 2"/><circle cx="1119" cy="386" r="5.500" fill="#e25a68"/>
<circle cx="1119" cy="462" r="6.500" fill="#5aa85f"/><circle cx="1119" cy="481" r="6.500" fill="#747474"/><circle cx="1119" cy="500" r="6.500" fill="#b0b0b0" stroke="#888" stroke-dasharray="2 1"/><circle cx="1119" cy="519" r="6.500" fill="#a85a60"/><circle cx="1119" cy="538" r="6.500" fill="#747474"/>
<rect x="1112" y="550" width="14" height="14" fill="#5aa85f"/><rect x="1112" y="569" width="14" height="14" fill="#757575"/><rect x="1112" y="588" width="14" height="14" fill="#a8a8a8"/><rect x="1112" y="607" width="14" height="14" fill="#a85a60"/><rect x="1112" y="626" width="14" height="14" fill="#757575"/>
<circle cx="1119" cy="652" r="5.500" fill="#e25a68"/>
<use href="#ad" x="1083" y="365"/>
<path d="M1095.500 360.500h5l1 2h8v11h-14z" fill="#f6e4b0" stroke="#a58a4a"/><path d="M1099 366h3M1099 369h3M1104 366h3M1104 369h3" stroke="#3a48a0"/>
<path d="M1102 666l4 4-4 4z" fill="#000"/>
<path d="M1111.500 665.500h5l1 2h9v11h-15z" fill="#f6e4b0" stroke="#a58a4a"/>
<path d="M1095 688v-5h5l1 1h8v4z" fill="#f6e4b0" stroke="#a58a4a"/>

<!-- right tab icons -->
<circle cx="1270" cy="113" r="6" fill="#4a78e8"/><text x="1258" y="122" font-size="13" font-family="Liberation Sans" fill="#223">A</text>
<rect x="1258" y="209" width="8" height="4" fill="#c030d0"/><rect x="1266" y="199" width="8" height="4" fill="#3a90c8"/><path d="M1265 204h3c1 2-2 3-3 5h4M1271 204v3" stroke="#223" fill="none"/>
<path d="M1259 285l7-3 7 3-7 3zM1259 289l7 3 7-3M1259 293l7 3 7-3" fill="#e8c050" stroke="#a08030" stroke-width=".6"/><path d="M1265 276h8M1265 279h8M1265 282h8" stroke="#334" stroke-dasharray="1 1"/>
<rect x="1259" y="357" width="11" height="10" fill="#eef" stroke="#a08030"/><path d="M1268 352l1 3 3 1-3 1-1 3-1-3-3-1 3-1z" fill="#e040e0"/><path d="M1270 361l4 5" stroke="#2a3a90" stroke-width="2"/>
<rect x="1259" y="426" width="11" height="14" fill="#fff" stroke="#a08030"/><path d="M1261 430h7M1261 433h7M1261 436h7" stroke="#223"/><path d="M1266 438l3 3 5-6" fill="none" stroke="#2a9a38" stroke-width="2"/>
<path d="M1259 506h7v11h-7zM1266 506h7v11h-7z" fill="#fff" stroke="#2a3a90"/>

<!-- lamp and buttons -->
<circle cx="663" cy="333" r="48" fill="#006a10"/><circle cx="663" cy="333" r="40" fill="#008c08"/>
<path d="M663 292.500c13 0 24 5 31 13-8-6-18-11-31-11-22 0-38 18-38 38 0 12 4 20 9 27-7-7-11-17-11-27 0-22 18-40 40-40z" fill="#c4ccc4"/>
<rect x="471" y="461" width="46" height="47" fill="#d8d8d8" stroke="#aaa"/><rect x="474" y="463.500" width="41" height="41" fill="#006a10"/><path d="M481 473l34-6v36l-40 1z" fill="#008c08"/><path d="M513 476l1 26-16 1 14-2z" fill="#bbb"/>
<rect x="779" y="466" width="46" height="46" fill="#d8d8d8" stroke="#aaa"/><rect x="781.500" y="468" width="41" height="41" fill="#640014"/><path d="M789 478l33-6v36l-39 1z" fill="#8f0008"/><path d="M820 480l1 26-16 1 14-2z" fill="#bbb"/>

<!-- scroll grips -->
<path d="M1031 406.500h8M1031 408.500h8M1031 410.500h8M1031 412.500h8M211 373.500h8M211 375.500h8M211 377.500h8M211 379.500h8M1241 458.500h8M1241 460.500h8M1241 462.500h8M1241 464.500h8" stroke="#666"/>
<path d="M460.500 690v8M462.500 690v8M464.500 690v8M466.500 690v8M109.500 693v8M111.500 693v8M113.500 693v8M115.500 693v8M1120.500 692v9M1122.500 692v9M1124.500 692v9M1126.500 692v9" stroke="#666"/>
<!-- scroll chevrons -->
<g fill="none" stroke="#555" stroke-width="2">
<path d="M210 185l4-4 4 4M1031 164l4-4 4 4M1241 236l4-4 4 4"/>
<path d="M210 678l4 4 4-4M1030 674l4 4 4-4"/>
<path d="M35 693l-4 4 4 4M237 690l-4 4 4 4M1058 693l-4 4 4 4"/>
<path d="M194 693l4 4-4 4M755 690l4 4-4 4M1225 693l4 4-4 4"/>
</g>
<path d="M914 690h9l-4.500 6z" fill="#222"/>
<path d="M945 693h22M975 693h45" stroke="#555"/><path d="M965 688h5v6l-2.500 3-2.500-3z" fill="#ddd" stroke="#777"/>
<path d="M945 699.500h66" stroke="#444" stroke-dasharray="1 2" stroke-width="3"/>
<path d="M1031 693l6-5h4v12h-8z" fill="#3a60c8" stroke="#111"/>
</svg>

<!-- text: title / menus -->
<div class="t" style="left:28px;top:3px;color:#fff">Siemens</div>
<div class="t" style="left:87px;top:3px;color:#fff">-</div>
<div class="t" style="left:103px;top:3px;color:#fff;letter-spacing:.65px">C:\Users\Administrator\Desktop\</div>
<div class="t" style="left:294px;top:3px;color:#fff;font-size:15px;font-weight:bold">寒假工程\触摸屏\触摸屏</div>
<div class="t" style="left:12px;top:29px">项目(P)</div><div class="t" style="left:66px;top:29px">编辑(E)</div><div class="t" style="left:123px;top:29px">视图(V)</div><div class="t" style="left:178px;top:29px">插入(I)</div><div class="t" style="left:230px;top:29px">在线(O)</div><div class="t" style="left:288px;top:29px">选项(N)</div><div class="t" style="left:346px;top:29px">工具(T)</div><div class="t" style="left:399px;top:29px">窗口(W)</div><div class="t" style="left:457px;top:29px">帮助(H)</div>
<div class="t" style="left:81px;top:51px;font-size:13px">保存项目</div>
<div class="t" style="left:492px;top:51px;font-size:13px">在线</div>
<div class="t" style="left:548px;top:51px;font-size:13px;color:#8a8a8a">离线</div>
<div class="t" style="left:1034px;top:36px;font-size:14px;letter-spacing:.42px;color:#1c1c28">Totally Integrated Automation</div>
<div class="t" style="left:1191px;top:51px;font-size:16px;font-weight:bold;color:#6e6e6e;letter-spacing:.2px">PORTAL</div>

<div class="t w" style="left:30px;top:78px;font-size:15px;font-weight:bold">项目树</div>
<div class="t" style="left:42px;top:107px;font-size:14px;font-weight:bold">设备</div>
<div class="t w" style="left:231px;top:78px;font-size:14px;font-weight:bold">触摸屏</div>
<div class="t w" style="left:302px;top:78px;font-size:14px;letter-spacing:.1px">HMI_1 [TP700 Comfort]</div>
<div class="t w" style="left:479px;top:78px;font-size:14px;font-weight:bold">画面</div>
<div class="t w" style="left:535px;top:78px;font-size:14px;font-weight:bold">画面 0</div>
<div class="t w" style="left:1052px;top:78px;font-size:14px">库</div>
<div class="t" style="left:1052px;top:106px;font-size:15px;font-weight:bold;color:#111">选件</div>
<div class="t" style="left:1073px;top:129px">库视图</div>
<div class="t" style="left:1071px;top:156px;font-size:14px;font-weight:bold;color:#111">项目库</div>
<div class="t" style="left:1071px;top:180px;font-size:14px;font-weight:bold;color:#111">全局库</div>
<div class="t" style="left:355px;top:132px;color:#777">16</div>
<div class="t" style="left:402px;top:131px;font-size:16px;font-weight:bold;color:#444">B</div>
<div class="t" style="left:428px;top:131px;font-size:16px;font-style:italic;color:#666">I</div>
<div class="t" style="left:450px;top:131px;font-size:16px;text-decoration:underline;color:#555">U</div>
<div class="t" style="left:474px;top:131px;font-size:16px;text-decoration:line-through;color:#555">S</div>
<div class="t" style="left:495px;top:132px;font-size:16px;color:#444">A</div>
<div class="b" style="left:506px;top:131px;width:0;height:0;border:3px solid transparent;border-bottom:4px solid #444"></div>
<div class="t" style="left:572px;top:129px;font-size:16px;color:#444">A</div>

<!-- tree text -->
<div class="t" style="left:99px;top:175px"><span style="color:#33204a">PLC</span> 数据类型</div>
<div class="t" style="left:99px;top:194px">监控与强制表</div>
<div class="t" style="left:99px;top:213px">在线备份</div>
<div class="t" style="left:99px;top:232px;color:#243a5a;letter-spacing:.6px">Traces</div>
<div class="t" style="left:99px;top:251px">设备代理数据</div>
<div class="t" style="left:99px;top:270px">程序信息</div>
<div class="t" style="left:99px;top:289px">文本列表</div>
<div class="t" style="left:99px;top:308px">本地模块</div>
<div class="t" style="left:81px;top:327px;letter-spacing:.4px">HMI_1 [TP700 C...</div>
<div class="t" style="left:99px;top:346px">设备组态</div>
<div class="t" style="left:99px;top:365px">在线和诊断</div>
<div class="t" style="left:99px;top:384px">运行系统设置</div>
<div class="t" style="left:99px;top:403px">画面</div>
<div class="t" style="left:117px;top:422px">添加新画面</div>
<div class="t" style="left:117px;top:441px">根画面</div>
<div class="t" style="left:117px;top:460px">画面 <span style="color:#c86a10">0</span></div>
<div class="t" style="left:99px;top:479px">画面管理</div>
<div class="t" style="left:99px;top:498px"><span style="color:#33204a">HMI</span> 变量</div>
<div class="t" style="left:99px;top:517px">连接</div>
<div class="t" style="left:99px;top:536px"><span style="color:#33204a">HMI</span> 报警</div>
<div class="t" style="left:99px;top:555px">配方</div>
<div class="t" style="left:99px;top:574px">历史数据</div>
<div class="t" style="left:99px;top:593px">脚本</div>
<div class="t" style="left:99px;top:612px">计划任务</div>
<div class="t" style="left:99px;top:631px">周期</div>
<div class="t" style="left:99px;top:650px">报表</div>
<div class="t" style="left:99px;top:669px">文本和图形...</div>

<!-- vertical labels -->
<div class="v" style="left:1px;top:186px;color:#f0f0f0;font-weight:bold;transform:rotate(180deg)">可视化</div>
<div class="v" style="left:1258px;top:126px">工具箱</div>
<div class="v" style="left:1258px;top:218px">动画</div>
<div class="v" style="left:1258px;top:296px">布局</div>
<div class="v" style="left:1258px;top:370px">指令</div>
<div class="v" style="left:1258px;top:446px">任务</div>
<div class="v" style="left:1258px;top:521px;color:#000;font-weight:bold">库</div>

<!-- red annotations -->
<svg class="b" style="left:0;top:0" width="1292" height="709" viewBox="0 0 1292 709" fill="none" stroke="#f01414" stroke-width="1.700" stroke-linecap="round" stroke-linejoin="round">
<path d="M1099 479C1078 473 1060 464 1030 456 1005 449 985 440 960 438 925 435 890 434 843 423"/>
<path d="M843 423C858 419 875 416 889 410"/>
<path d="M843 423C852 432 858 445 864 453L869 455"/>
<path d="M1071 229C1076 215 1088 200 1095 189 1105 195 1120 205 1130 207 1137 209 1143 207 1150 208"/>
<path d="M1095 189C1095 200 1096 212 1101 222 1110 240 1118 262 1126 278 1135 300 1148 335 1160 355 1175 385 1195 425 1210 455 1220 475 1232 492 1241 497"/>
<path d="M1243 497C1232 510 1232 530 1231 548 1232 565 1240 572 1255 573L1273 573"/>
<path d="M1240 495C1248 493 1255 491 1259 494 1266 500 1270 510 1282 516 1290 525 1291 545 1290 558 1288 568 1286 574 1282 573 1277 571 1272 566 1268 567"/>
</svg>

<!-- watermark -->
<div class="t" style="left:985px;top:671px;font-size:26px;line-height:28px;color:#e4e4e4;letter-spacing:.6px;text-shadow:1px 1px 1px #444,-1px 0 1px #555">头条号 / 电气技术微课堂</div>
</div></body></html>
